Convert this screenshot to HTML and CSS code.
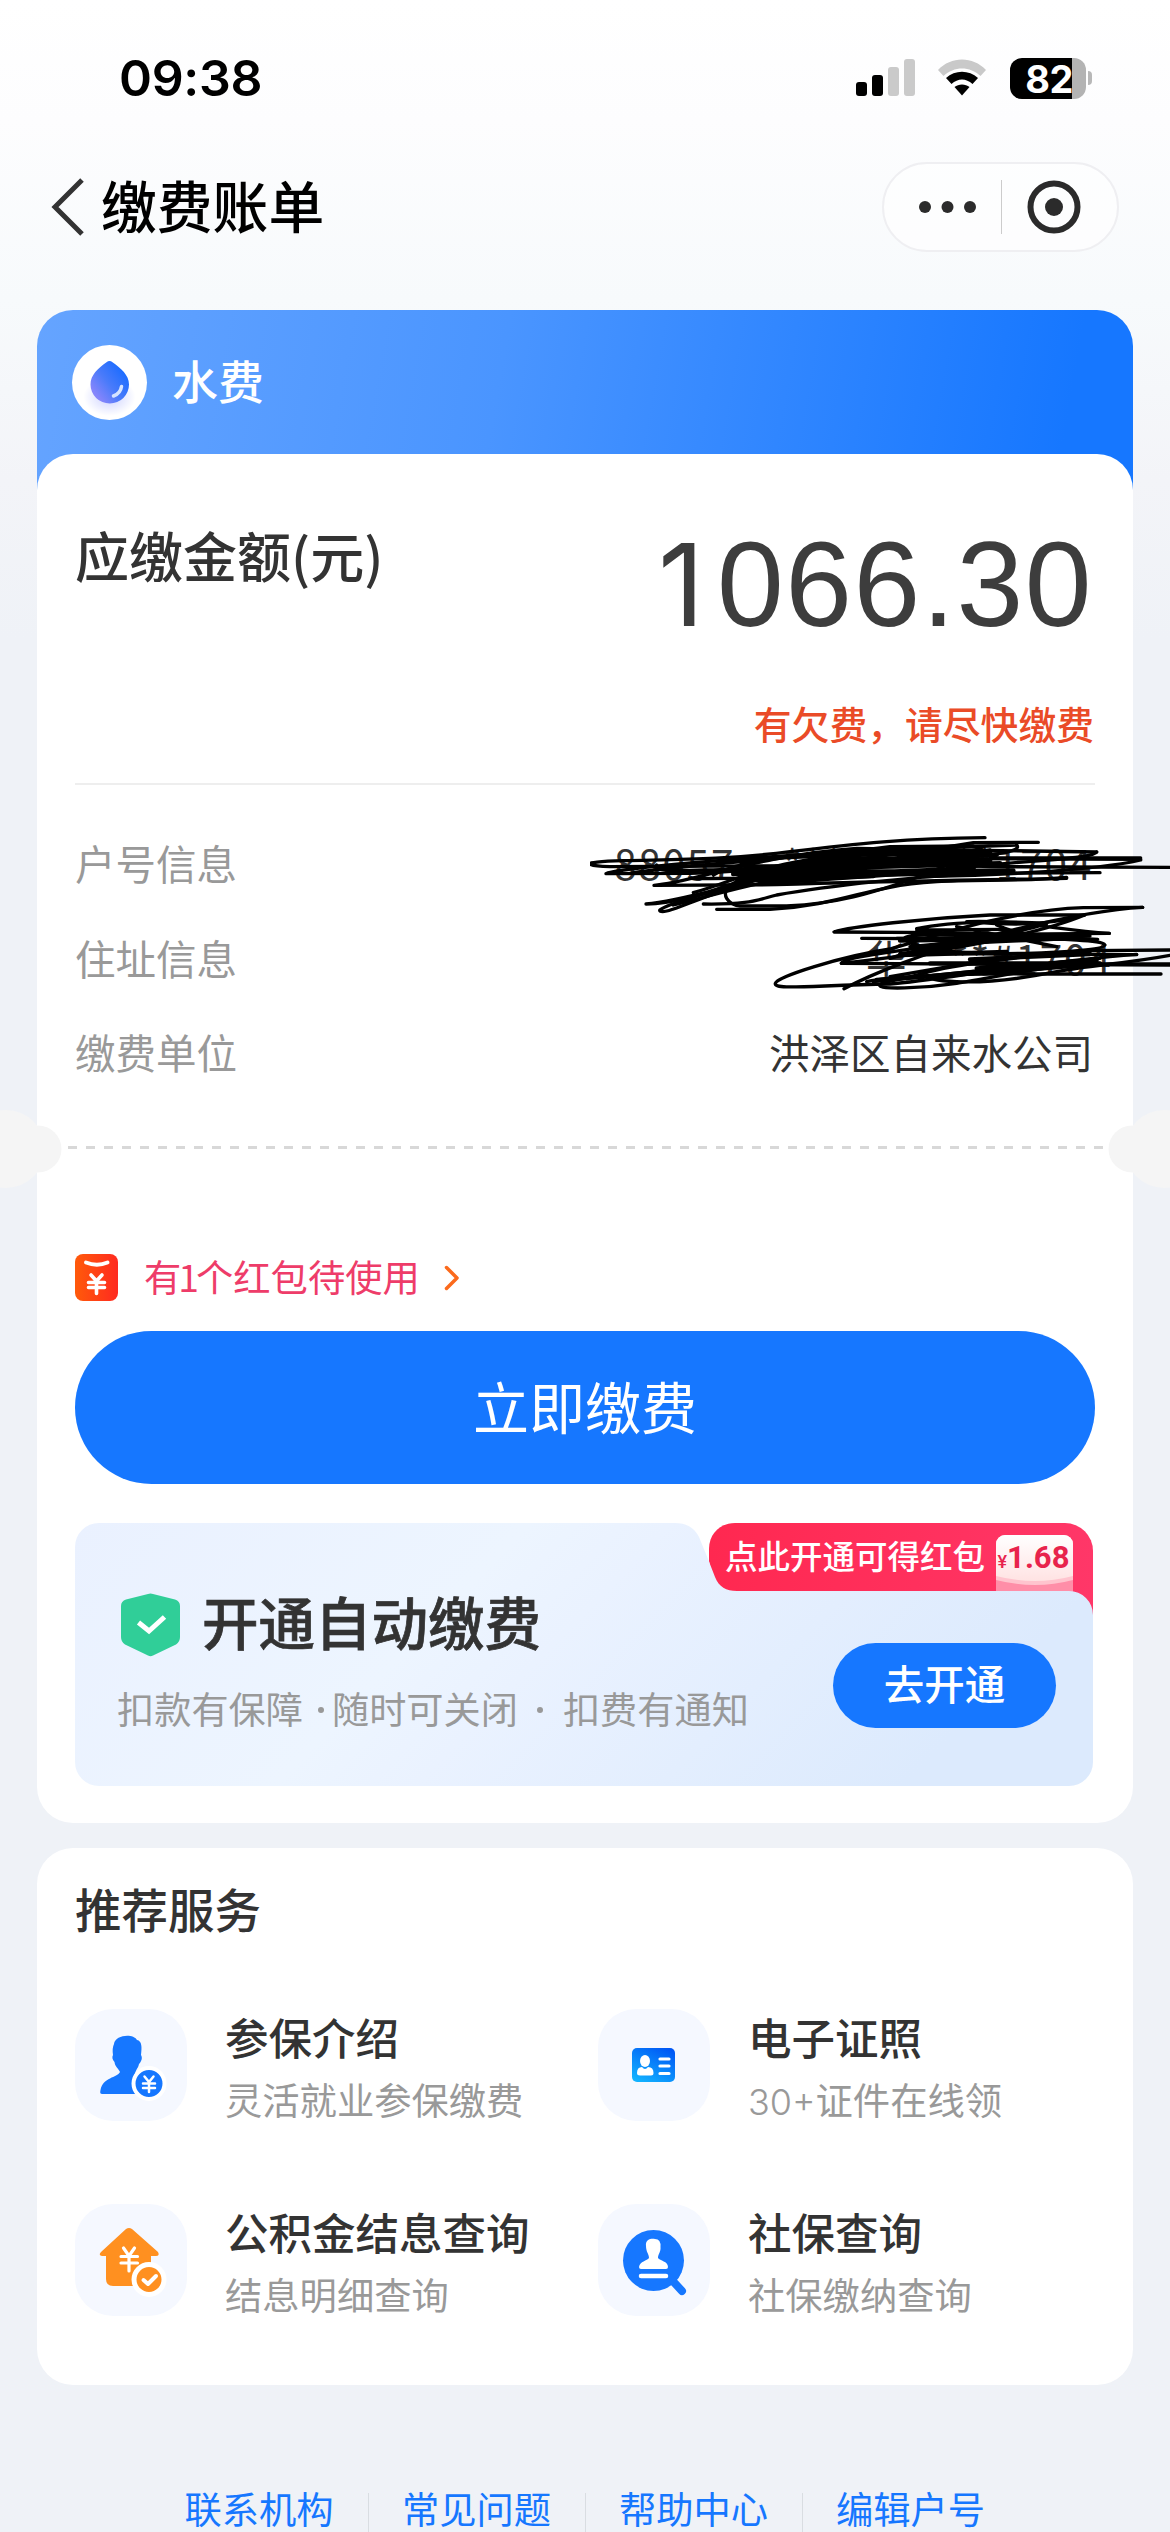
FILE: index.html
```html
<!DOCTYPE html>
<html lang="zh-CN">
<head>
<meta charset="utf-8">
<title>缴费账单</title>
<link rel="stylesheet" href="styles.css">
</head>
<body>
<header class="status">
  <span class="clock">09:38</span>
  <div class="indicators">
    <svg class="signal" width="59" height="38" viewBox="0 0 59 38"><rect x="0" y="23" width="11" height="14" rx="3"/><rect x="16" y="16" width="11" height="21" rx="3"/><rect x="32" y="8" width="11" height="29" rx="3" fill="#cacaca"/><rect x="48" y="0" width="11" height="37" rx="3" fill="#cacaca"/></svg>
    <svg class="wifi" width="50" height="38" viewBox="0 0 50 38"><path d="M1 11C14-3 36-3 49 11L43.500 17C33 7 17 7 6.500 17Z" fill="#c9c9c9"/><path d="M9 19C18 10.500 32 10.500 41 19L35.500 25C29 19 21 19 14.500 25Z"/><path d="M17.500 28C21.500 24.500 28.500 24.500 32.500 28L25 36.500Z"/></svg>
    <div class="battery"><span class="level">82</span><i class="nub"></i></div>
  </div>
</header>
<nav class="nav">
  <svg class="back" width="34" height="58" viewBox="0 0 34 58"><path d="M31 2L4 29L31 56" fill="none" stroke="#333" stroke-width="5"/></svg>
  <h1 class="nav-title">缴费账单</h1>
  <div class="capsule">
    <svg width="57" height="12" viewBox="0 0 57 12" fill="#2b2b2b"><circle cx="6" cy="6" r="6"/><circle cx="28.500" cy="6" r="6"/><circle cx="51" cy="6" r="6"/></svg>
    <i class="capsule-line"></i>
    <svg width="54" height="54" viewBox="0 0 54 54"><circle cx="27" cy="27" r="23.500" fill="none" stroke="#2b2b2b" stroke-width="6"/><circle cx="27" cy="27" r="9" fill="#2b2b2b"/></svg>
  </div>
</nav>

<main>
<section class="bill">
  <div class="bill-head">
    <span class="drop"><svg width="75" height="75" viewBox="0 0 75 75"><defs><linearGradient id="dropFill" x1=".85" y1=".2" x2=".15" y2=".8"><stop offset="0" stop-color="#1b6cff"/><stop offset=".55" stop-color="#4a7bfa"/><stop offset="1" stop-color="#8585fb"/></linearGradient><radialGradient id="dropGlow"><stop offset="0" stop-color="#a9b2ff" stop-opacity=".6"/><stop offset="1" stop-color="#a9b2ff" stop-opacity="0"/></radialGradient></defs><ellipse cx="37.500" cy="52" rx="26" ry="19" fill="url(#dropGlow)"/><path d="M34.500 17.300Q37.500 14.500 40.500 17.300C49 23.500 57 30 57 39.500A19.200 19 0 0 1 18.500 39.500C18.500 30 26 23.500 34.500 17.300Z" fill="url(#dropFill)"/><path d="M49.500 41.500Q48.500 48.500 41.500 51" fill="none" stroke="#d5e3ff" stroke-width="3.500" stroke-linecap="round"/></svg></span>
    <span class="bill-name">水费</span>
  </div>
  <div class="panel">
    <div class="due">
      <div class="due-row"><span class="due-label">应缴金额(元)</span><span class="amount"><span class="lead">1</span>066.30</span></div>
      <p class="warn">有欠费，请尽快缴费</p>
    </div>
    <div class="info">
      <dl class="rows">
        <div class="row"><dt>户号信息</dt><dd class="masked"><span>88057</span><span>*****</span><span>***1704</span></dd></div>
        <div class="row"><dt>住址信息</dt><dd class="masked short"><span>华</span><span>****</span><span>#1704</span></dd></div>
        <div class="row"><dt>缴费单位</dt><dd>洪泽区自来水公司</dd></div>
      </dl>
      <svg class="scribble" width="580" height="170" viewBox="0 0 1740 510">
        <g fill="none" stroke="#000" stroke-width="10" stroke-linecap="round" stroke-linejoin="round">
          <path d="M1185 23C950 25 800 40 600 65S250 88 100 92S-5 108 60 110L1000 105"/>
          <path d="M1345 37L1150 38C900 80 500 125 300 130L48 131C60 118 500 70 1280 45"/>
          <path d="M1280 45C1300 66 1200 75 1100 85L420 118C300 120 180 130 200 105"/>
          <path d="M1520 66L800 55C500 75 300 160 192 166L560 164C900 152 1200 150 1430 145"/>
          <path d="M1520 66C1500 90 1300 90 1150 110S700 150 520 160"/>
          <path d="M1652 88L780 85C500 100 350 220 168 222C300 210 450 150 700 110"/>
          <path d="M1652 84L1200 84M1652 90C1500 125 1150 138 1000 140"/>
          <path d="M1530 128L1200 130C1000 135 700 170 560 195C500 210 480 224 340 222"/>
          <path d="M380 238L540 238C700 230 800 190 900 172C1050 140 1250 160 1430 142"/>
          <path d="M1740 112L1200 110C800 90 480 130 430 160S420 228 450 228L590 228C750 220 840 190 960 150C1050 120 1130 70 1200 60"/>
          <path d="M310 188C450 150 500 100 800 70S1200 50 1180 50C1150 80 700 90 500 150S230 255 210 243S500 140 700 110"/>
          <path d="M440 150C600 80 900 60 1180 62C1100 80 700 120 470 150M300 145C500 150 900 130 1270 130M370 135C450 90 650 70 840 66M120 130C300 100 600 90 900 50L1150 48M400 92L1100 60M250 225C400 190 520 140 760 130"/>
          <path d="M470 128L1270 122M500 120L1230 100M540 112L1200 92M560 138L1150 116M600 104L1100 76M620 130L1080 86M700 98L1220 74M480 140L1000 124M430 132L900 100M700 76L1200 66M480 150L850 138" stroke-width="14"/>
          <path d="M1658 232L1480 233C1250 240 1000 330 900 357C750 380 560 440 556 460S650 467 900 462C1050 450 1300 400 1640 373"/>
          <path d="M1484 255L1200 255C1000 265 780 290 732 306L1050 308C1250 310 1400 325 1523 328L815 325"/>
          <path d="M1558 310C1400 300 1300 270 1130 275C1200 280 1350 295 1484 255C1400 290 1200 350 754 400C760 380 900 370 1000 350S1300 310 1370 280"/>
          <path d="M754 400L1740 405M1180 402L1740 402"/>
          <path d="M762 476C850 430 1000 370 1150 330S1500 240 1658 232"/>
          <path d="M1740 360L1500 362C1300 380 1100 400 1000 430S880 450 870 465S1000 475 1100 460S1400 400 1530 400"/>
          <path d="M1740 376C1600 402 1500 405 1400 425S1200 460 1100 455S1030 440 1020 440"/>
          <path d="M1713 432L1300 432C1100 430 900 440 830 455"/>
          <path d="M1558 310L1100 314C900 310 920 330 1000 350C1100 385 1540 370 1545 345C1530 320 1350 345 1220 285"/>
          <path d="M980 296C1100 270 1300 275 1370 280M900 385C1050 330 1200 340 1450 325M930 370L1640 374M960 350L1300 318M850 455L1530 385M920 325L1500 318M980 300L1250 298M930 372C1100 350 1200 330 1300 300M1100 290L1400 350M900 440L1250 380"/>
          <path d="M1160 415L1520 390M1180 430L1480 405M1140 388L1500 372M950 445L1260 415M1220 424L1530 402M930 375L1250 366M860 450L1150 430M930 332L1450 324M1020 400L1530 400" stroke-width="13"/>
        </g>
      </svg>
    </div>
    <div class="tear"><svg width="1170" height="78" viewBox="0 0 1170 78" fill="#f5f5f5"><circle cx="6" cy="39" r="39"/><circle cx="38" cy="39" r="23.500"/><circle cx="1164" cy="39" r="39"/><circle cx="1132" cy="39" r="23.500"/><path d="M68 37.500H1104" stroke="#d8d8d8" stroke-width="3" stroke-dasharray="9 9"/></svg></div>
    <div class="packet">
      <svg width="43" height="47" viewBox="0 0 43 47"><defs><linearGradient id="pk"><stop offset="0" stop-color="#ff5a0a"/><stop offset="1" stop-color="#ff2a20"/></linearGradient></defs><rect width="43" height="47" rx="8" fill="url(#pk)"/><g fill="none" stroke="#fff" stroke-width="3.600" stroke-linecap="round"><path d="M11 8.500Q22 13 32.500 8.500" stroke-width="4"/><path d="M16 21L21.500 27L27 21M21.500 27V39.500M13.500 28.500H29.500M13.500 33.500H29.500"/></g></svg>
      <span>有<em>1</em>个红包待使用</span>
      <svg width="16" height="26" viewBox="0 0 16 26"><path d="M2.500 2.500L13 13L2.500 23.500" fill="none" stroke="#fb6a1c" stroke-width="3.500" stroke-linecap="round" stroke-linejoin="round"/></svg>
    </div>
    <button class="pay">立即缴费</button>
    <div class="promo">
      <svg class="promo-bg" width="1018" height="263" viewBox="0 0 1018 263"><defs><linearGradient id="pb" x1="0" y1="0" x2="1" y2=".25"><stop offset="0" stop-color="#eaf1ff"/><stop offset=".42" stop-color="#edf5ff"/><stop offset=".55" stop-color="#eaf2ff"/><stop offset="1" stop-color="#dceafd"/></linearGradient><linearGradient id="rd"><stop offset="0" stop-color="#ff2850"/><stop offset="1" stop-color="#ff3768"/></linearGradient><linearGradient id="tk" x2="0" y2="1"><stop offset="0" stop-color="#fff"/><stop offset="1" stop-color="#ffe3e3"/></linearGradient></defs>
        <path d="M660 0H990a28 28 0 0 1 28 28V100H645L634 38V26C634 10 646 0 660 0Z" fill="url(#rd)"/>
        <path d="M921 21a9 9 0 0 1 9-9h59a9 9 0 0 1 9 9V70h-77Z" fill="#ff8ea8"/>
        <path d="M921 52V21a9 9 0 0 1 9-9h59a9 9 0 0 1 9 9V57Q960 67 921 57Z" fill="#ffc4ce"/>
        <path d="M921 21a9 9 0 0 1 9-9h59a9 9 0 0 1 9 9V53Q960 63 921 53Z" fill="url(#tk)"/>
        <path d="M24 0H600C613 0 620 6 624 14L633 36L640 54C644 64 651 68 662 68H994a24 24 0 0 1 24 24V239a24 24 0 0 1-24 24H24a24 24 0 0 1-24-24V24A24 24 0 0 1 24 0Z" fill="url(#pb)"/>
      </svg>
      <div class="bonus"><span class="bonus-text">点此开通可得红包</span><span class="price"><small>¥</small>1.68</span></div>
      <div class="promo-main">
        <div class="promo-copy">
          <h2><svg width="59" height="64" viewBox="0 0 59 64"><path d="M27 1Q29.500 0 32 1L54 6.500Q59 8 59 13V44Q59 49 55 51.500L32 62.500Q29.500 64 27 62.500L4 51.500Q0 49 0 44V13Q0 8 5 6.500Z" fill="#30ce98"/><path d="M17.500 29.500L28 38L43.500 24" fill="none" stroke="#fff" stroke-width="5"/></svg><span>开通自动缴费</span></h2>
          <p><span>扣款有保障</span><i class="dot"></i><span>随时可关闭</span><i class="dot wide"></i><span>扣费有通知</span></p>
        </div>
        <button class="go">去开通</button>
      </div>
    </div>
  </div>
</section>

<section class="services">
  <h2>推荐服务</h2>
  <div class="grid">
    <div class="item">
      <span class="tile"><svg viewBox="0 0 112 112"><path d="M39 35C40 26 58 24 62 31C67 32 67 38 66 46C68 49 66 53 64 55C63 60 60 61 60 66C66 70 83 68 86 85H28C25 85 25 84 25.500 81C28 68 42 69 45 63C44 60 40 58 39.500 53C37 50 37 48 38 46Q37 39 39 35Z" fill="#1677ff"/><circle cx="74" cy="74.500" r="15.500" fill="#1677ff" stroke="#fff" stroke-width="4"/><path d="M69.500 67.500L74 73L78.500 67.500M74 73V83M68 74.500H80M68 79H80" fill="none" stroke="#fff" stroke-width="2.500" stroke-linecap="round"/></svg></span>
      <div class="txt"><b>参保介绍</b><span>灵活就业参保缴费</span></div>
    </div>
    <div class="item">
      <span class="tile"><svg viewBox="0 0 112 112"><defs><linearGradient id="idc" x1=".8" y1="0" x2=".2" y2="1"><stop offset="0" stop-color="#0057f5"/><stop offset="1" stop-color="#12b2ff"/></linearGradient></defs><rect x="34" y="39" width="43" height="34" rx="5" fill="url(#idc)"/><g fill="#fff"><ellipse cx="47" cy="52" rx="5" ry="6"/><path d="M39 64Q39 58 44 58Q47 62 50 58Q55.500 58 55.500 64Q55.500 66.500 53 66.500H42Q39 66.500 39 64Z"/></g><path d="M62 50H71M62 57H71M62 64.500H71" stroke="#fff" stroke-width="3.200" stroke-linecap="round"/></svg></span>
      <div class="txt"><b>电子证照</b><span><em>30+</em>证件在线领</span></div>
    </div>
    <div class="item">
      <span class="tile"><svg viewBox="0 0 112 112"><path d="M51 25Q54 23 57 25L83 48Q85 52 81 52H76V74Q76 82 70 82H38Q31 82 31 75V52H27Q23 51 26 48Z" fill="#ff9020"/><path d="M48.500 44L54 52L59.500 44M54 52V67M46 52.500H62.500M46 59H62.500" fill="none" stroke="#fff" stroke-width="3.200" stroke-linecap="round"/><circle cx="74" cy="75.500" r="15" fill="#ff9020" stroke="#fff" stroke-width="5"/><path d="M68.500 76L73 80L81 72" fill="none" stroke="#fff" stroke-width="4" stroke-linecap="round" stroke-linejoin="round"/></svg></span>
      <div class="txt"><b>公积金结息查询</b><span>结息明细查询</span></div>
    </div>
    <div class="item">
      <span class="tile"><svg viewBox="0 0 112 112"><circle cx="55.500" cy="56.500" r="30.500" fill="#1677ff"/><path d="M72 74L84 87" stroke="#1677ff" stroke-width="8" stroke-linecap="round"/><path d="M48 42C47 35 54 34 57 35Q63 35 62.500 43C63 48 60 50 60 54C62 57 70 57 70 63Q70 65 68 65H43Q41 65 41 63C42 57 49 57 51 54C51 50 48 48 48 42Z" fill="#fff"/><path d="M43 72H68" stroke="#fff" stroke-width="4.500" stroke-linecap="round"/></svg></span>
      <div class="txt"><b>社保查询</b><span>社保缴纳查询</span></div>
    </div>
  </div>
</section>
</main>
<footer class="links"><a>联系机构</a><a>常见问题</a><a>帮助中心</a><a>编辑户号</a></footer>
</body>
</html>
```
FILE: styles.css
```css
* { box-sizing: border-box; margin: 0; padding: 0; }
body {
  width: 1170px;
  height: 2532px;
  overflow: hidden;
  display: flex;
  flex-direction: column;
  font-family: "Noto Sans CJK SC", sans-serif;
  color: #333;
  background: linear-gradient(180deg, #fff 0, #fdfdfe 120px, #f7fafc 300px, #f3f4f8 480px, #eff2f7 640px, #eff2f7 100%);
}
i, em { font-style: normal; }
svg { display: block; flex: none; }
button { border: 0; font-family: inherit; color: #fff; background: #1677ff; }

.status { height: 156px; display: flex; justify-content: space-between; padding: 0 78px 0 119px; }
.clock { font: 600 50px/156px Inter, sans-serif; letter-spacing: -0.3px; color: #000; }
.indicators { display: flex; align-items: center; }
.signal { margin-right: 22px; }
.wifi { margin-right: 23px; }
.battery { display: flex; align-items: center; gap: 2px; }
.level {
  width: 76px; height: 41px; border-radius: 12px; padding-left: 2px;
  background: linear-gradient(90deg, #000 62px, #b3b3b3 62px);
  color: #fff; font: 700 38px/42px Inter, sans-serif; letter-spacing: -0.5px; text-align: center;
}
.nub { width: 4px; height: 14px; border-radius: 0 4px 4px 0; background: #b8b8b8; }

.nav { height: 154px; padding: 6px 51px 0 51px; display: flex; align-items: flex-start; }
.back { margin-top: 16px; }
.nav-title { margin-left: 16px; font-size: 55.8px; font-weight: 500; line-height: 84px; color: #000; }
.capsule {
  margin-left: auto; width: 237px; height: 90px; border: 2px solid #efeff2; border-radius: 45px;
  display: flex; align-items: center; padding: 0 36px 0 35px; background: rgba(255,255,255,.6);
}
.capsule-line { width: 1px; height: 54px; background: #ccc; margin: 0 25px; flex: none; }

.bill { margin: 0 37px; }
.bill-head {
  height: 188px; padding: 35px 35px 0; display: flex; align-items: flex-start; gap: 25px;
  border-radius: 36px 36px 0 0;
  background: linear-gradient(100deg, #65a4ff 0%, #4a95ff 42%, #1677ff 93%);
}
.drop { width: 75px; height: 75px; border-radius: 50%; background: #fff; }
.bill-name { font-size: 46px; line-height: 68px; font-weight: 500; color: #fff; }
.panel {
  margin-top: -44px; height: 1369px; padding: 0 38px; background: #fff; border-radius: 36px;
}
.due { height: 331px; border-bottom: 2px solid #eee; }
.due-row { display: flex; justify-content: space-between; height: 234px; }
.due-label { font-size: 54px; font-weight: 500; line-height: 80px; padding-top: 61px; }
.amount { font: 120px/138px "Liberation Sans", sans-serif; letter-spacing: 1.5px; color: #3d3d3d; padding: 61px 2px 0 0; }
.lead { font-family: Inter, sans-serif; font-size: 114px; line-height: 1; margin-right: 11px; }
.warn { text-align: right; font-size: 37.8px; font-weight: 500; line-height: 70px; color: #ea4b27; padding-right: 1px; }

.info { position: relative; height: 340px; padding-top: 31px; }
.row { height: 94.5px; display: flex; justify-content: space-between; align-items: center; font-size: 40.5px; line-height: 60px; padding-right: 2px; }
.row dt { color: #999; }
.masked { width: 479px; display: flex; justify-content: space-between; letter-spacing: 1.8px; }
.masked.short { width: 227px; }
.scribble { position: absolute; left: 515px; top: 45px; }
.tear { height: 48px; margin: -15px -75px 0; }
.packet { height: 77px; margin-top: 96px; display: flex; align-items: flex-start; gap: 26px; font-size: 37.3px; color: #ee3c69; }
.packet span { line-height: 44px; }
.packet em { margin: 0 -3px; }
.packet svg:last-child { margin: 11px 0 0 -2px; }
.pay { width: 1020px; height: 153px; border-radius: 77px; font-size: 56px; line-height: 147px; padding-bottom: 6px; display: block; }

.promo { position: relative; width: 1018px; height: 263px; margin-top: 39px; }
.promo-bg { position: absolute; left: 0; top: 0; }
.bonus { position: relative; height: 68px; padding-left: 650px; display: flex; color: #fff; }
.bonus-text { width: 271px; font-size: 32.5px; font-weight: 500; line-height: 64px; }
.price { width: 75px; text-align: center; font: 700 31px/70px Roboto, sans-serif; color: #e8234c; white-space: nowrap; }
.price small { font-size: 18px; font-weight: 500; }
.promo-main { position: relative; display: flex; justify-content: space-between; padding: 0 37px 0 42px; }
.promo-copy h2 { display: flex; align-items: center; gap: 22px; padding-left: 4px; font-size: 56.5px; font-weight: 500; -webkit-text-stroke: .7px #333; line-height: 64px; margin-top: 2px; }
.promo-copy h2 span { margin-top: -11px; }
.promo-copy p { display: flex; align-items: center; font-size: 37.2px; line-height: 50px; color: #999; margin-top: 26px; }
.dot { width: 6px; height: 6px; border-radius: 50%; background: #999; margin: 4px 8px 0 15px; }
.dot.wide { margin: 4px 20px 0 19px; }
.go { width: 223px; height: 85px; margin-top: 52px; border-radius: 43px; font-size: 40.5px; font-weight: 500; line-height: 79px; padding-bottom: 6px; }

.services { margin: 25px 37px 0; height: 537px; background: #fff; border-radius: 36px; padding: 30px 38px 0; }
.services h2 { font-size: 46.5px; font-weight: 500; line-height: 60px; margin-bottom: 71px; }
.grid { display: grid; grid-template-columns: 523px 1fr; row-gap: 83px; }
.item { height: 112px; display: flex; gap: 38px; }
.tile { width: 112px; height: 112px; border-radius: 38px; background: #f5f8ff; }
.txt { display: flex; flex-direction: column; white-space: nowrap; }
.txt b { font-size: 43.5px; font-weight: 500; line-height: 62px; margin-top: -3px; }
.txt span { font-size: 37.3px; line-height: 62px; color: #999; }
.txt em { font-family: Inter, sans-serif; font-size: 36px; font-weight: 300; line-height: 1; }

.links { height: 39px; margin: 108px 0 0 151px; display: flex; }
.links a { width: 217px; height: 60px; padding-right: 1px; text-align: center; font-size: 37.3px; line-height: 31px; color: #1677ff; }
.links a + a { border-left: 1px solid #d9dde2; }
```
